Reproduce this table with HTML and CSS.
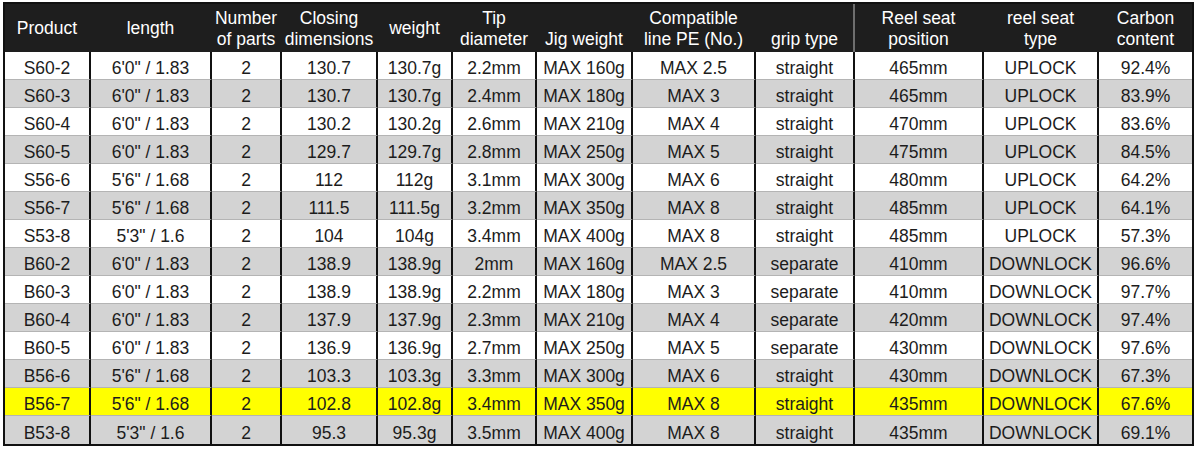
FILE: index.html
```html
<!DOCTYPE html>
<html>
<head>
<meta charset="utf-8">
<link rel="stylesheet" href="styles.css">
</head>
<body>
<table class="spec">
<colgroup>
<col class="c1"><col class="c2"><col class="c3"><col class="c4"><col class="c5"><col class="c6"><col class="c7"><col class="c8"><col class="c9"><col class="c10"><col class="c11"><col class="c12">
</colgroup>
<thead>
<tr>
<th>Product</th>
<th>length</th>
<th>Number<br>of parts</th>
<th>Closing<br>dimensions</th>
<th>weight</th>
<th>Tip<br>diameter</th>
<th class="bottom">Jig weight</th>
<th>Compatible<br>line PE (No.)</th>
<th class="bottom sep">grip type</th>
<th>Reel seat<br>position</th>
<th>reel seat<br>type</th>
<th>Carbon<br>content</th>
</tr>
</thead>
<tbody>
<tr><td>S60-2</td><td>6'0&quot; / 1.83</td><td>2</td><td>130.7</td><td>130.7g</td><td>2.2mm</td><td>MAX 160g</td><td>MAX 2.5</td><td>straight</td><td>465mm</td><td>UPLOCK</td><td>92.4%</td></tr>
<tr class="alt"><td>S60-3</td><td>6'0&quot; / 1.83</td><td>2</td><td>130.7</td><td>130.7g</td><td>2.4mm</td><td>MAX 180g</td><td>MAX 3</td><td>straight</td><td>465mm</td><td>UPLOCK</td><td>83.9%</td></tr>
<tr><td>S60-4</td><td>6'0&quot; / 1.83</td><td>2</td><td>130.2</td><td>130.2g</td><td>2.6mm</td><td>MAX 210g</td><td>MAX 4</td><td>straight</td><td>470mm</td><td>UPLOCK</td><td>83.6%</td></tr>
<tr class="alt"><td>S60-5</td><td>6'0&quot; / 1.83</td><td>2</td><td>129.7</td><td>129.7g</td><td>2.8mm</td><td>MAX 250g</td><td>MAX 5</td><td>straight</td><td>475mm</td><td>UPLOCK</td><td>84.5%</td></tr>
<tr><td>S56-6</td><td>5'6&quot; / 1.68</td><td>2</td><td>112</td><td>112g</td><td>3.1mm</td><td>MAX 300g</td><td>MAX 6</td><td>straight</td><td>480mm</td><td>UPLOCK</td><td>64.2%</td></tr>
<tr class="alt"><td>S56-7</td><td>5'6&quot; / 1.68</td><td>2</td><td>111.5</td><td>111.5g</td><td>3.2mm</td><td>MAX 350g</td><td>MAX 8</td><td>straight</td><td>485mm</td><td>UPLOCK</td><td>64.1%</td></tr>
<tr><td>S53-8</td><td>5'3&quot; / 1.6</td><td>2</td><td>104</td><td>104g</td><td>3.4mm</td><td>MAX 400g</td><td>MAX 8</td><td>straight</td><td>485mm</td><td>UPLOCK</td><td>57.3%</td></tr>
<tr class="alt"><td>B60-2</td><td>6'0&quot; / 1.83</td><td>2</td><td>138.9</td><td>138.9g</td><td>2mm</td><td>MAX 160g</td><td>MAX 2.5</td><td>separate</td><td>410mm</td><td>DOWNLOCK</td><td>96.6%</td></tr>
<tr><td>B60-3</td><td>6'0&quot; / 1.83</td><td>2</td><td>138.9</td><td>138.9g</td><td>2.2mm</td><td>MAX 180g</td><td>MAX 3</td><td>separate</td><td>410mm</td><td>DOWNLOCK</td><td>97.7%</td></tr>
<tr class="alt"><td>B60-4</td><td>6'0&quot; / 1.83</td><td>2</td><td>137.9</td><td>137.9g</td><td>2.3mm</td><td>MAX 210g</td><td>MAX 4</td><td>separate</td><td>420mm</td><td>DOWNLOCK</td><td>97.4%</td></tr>
<tr><td>B60-5</td><td>6'0&quot; / 1.83</td><td>2</td><td>136.9</td><td>136.9g</td><td>2.7mm</td><td>MAX 250g</td><td>MAX 5</td><td>separate</td><td>430mm</td><td>DOWNLOCK</td><td>97.6%</td></tr>
<tr class="alt"><td>B56-6</td><td>5'6&quot; / 1.68</td><td>2</td><td>103.3</td><td>103.3g</td><td>3.3mm</td><td>MAX 300g</td><td>MAX 6</td><td>straight</td><td>430mm</td><td>DOWNLOCK</td><td>67.3%</td></tr>
<tr class="hl"><td>B56-7</td><td>5'6&quot; / 1.68</td><td>2</td><td>102.8</td><td>102.8g</td><td>3.4mm</td><td>MAX 350g</td><td>MAX 8</td><td>straight</td><td>435mm</td><td>DOWNLOCK</td><td>67.6%</td></tr>
<tr class="alt last"><td>B53-8</td><td>5'3&quot; / 1.6</td><td>2</td><td>95.3</td><td>95.3g</td><td>3.5mm</td><td>MAX 400g</td><td>MAX 8</td><td>straight</td><td>435mm</td><td>DOWNLOCK</td><td>69.1%</td></tr>
</tbody>
</table>
</body>
</html>
```
FILE: styles.css
```css
html, body {
  margin: 0;
  padding: 0;
  background: #ffffff;
}

.spec {
  margin: 2px 0 0 3px;
  border: 2px solid #111111;
  border-collapse: separate;
  border-spacing: 0;
  table-layout: fixed;
  width: 1191px;
  font-family: "Liberation Sans", Arial, Helvetica, sans-serif;
  font-size: 17.5px;
  color: #1c1c1c;
}

.c1 { width: 86px; }
.c2 { width: 121px; }
.c3 { width: 70px; }
.c4 { width: 96px; }
.c5 { width: 75px; }
.c6 { width: 84px; }
.c7 { width: 96px; }
.c8 { width: 123px; }
.c9 { width: 99px; }
.c10 { width: 129px; }
.c11 { width: 115px; }
.c12 { width: 93px; }

.spec th {
  box-sizing: border-box;
  height: 48px;
  padding: 3px 0 2px;
  background: #1e1e1e;
  color: #ffffff;
  font-weight: normal;
  line-height: 21px;
  text-align: center;
  vertical-align: middle;
  white-space: nowrap;
  border-right: 2px solid #1e1e1e;
}

.spec th:last-child {
  border-right: none;
}

.spec th.bottom {
  vertical-align: bottom;
}

.spec th.sep {
  border-right-color: #6e6e6e;
}

.spec td {
  box-sizing: border-box;
  height: 28px;
  padding: 5px 0 0;
  line-height: 22px;
  text-align: center;
  vertical-align: middle;
  white-space: nowrap;
  background: #ffffff;
  border-right: 2px solid #111111;
  border-bottom: 1px solid #b4b4b4;
}

.spec td:last-child {
  border-right: none;
}

.spec tr.alt td {
  background: #d3d3d3;
}

.spec tr.hl td {
  background: #ffff00;
}

.spec tr.last td {
  border-bottom: none;
}
```
